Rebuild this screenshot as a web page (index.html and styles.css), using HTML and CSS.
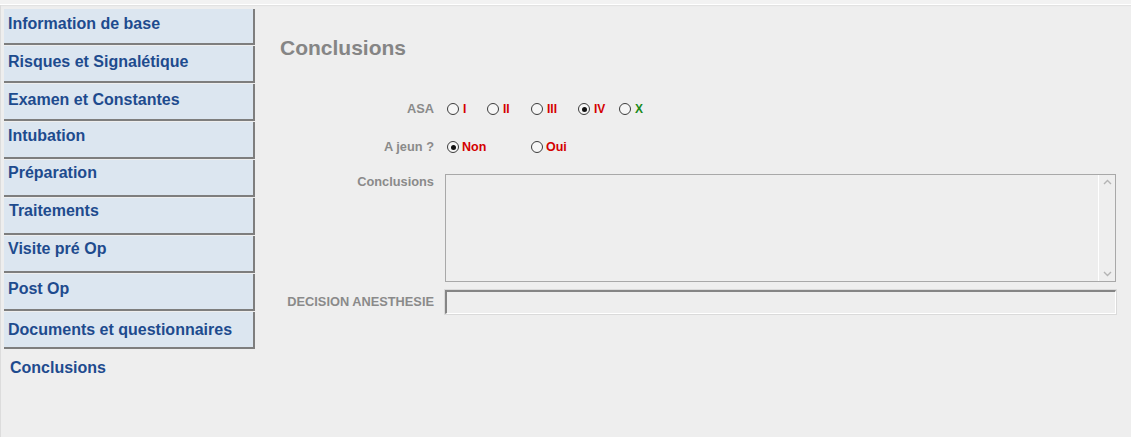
FILE: index.html
```html
<!DOCTYPE html>
<html lang="fr">
<head>
<meta charset="utf-8">
<title>Conclusions</title>
<link rel="stylesheet" href="styles.css">
</head>
<body>
<div class="topbar"></div>
<div class="page">
  <nav class="sidebar">
    <div class="tab tab-first">Information de base</div>
    <div class="tab">Risques et Signalétique</div>
    <div class="tab">Examen et Constantes</div>
    <div class="tab tab-p5">Intubation</div>
    <div class="tab tab-p4">Préparation</div>
    <div class="tab tab-p4 tab-indent">Traitements</div>
    <div class="tab tab-p4">Visite pré Op</div>
    <div class="tab tab-p6">Post Op</div>
    <div class="tab tab-p9">Documents et questionnaires</div>
    <div class="current">Conclusions</div>
  </nav>
  <main class="main">
    <h1 class="title">Conclusions</h1>
    <div class="form">
      <div class="row row-asa">
        <div class="label">ASA</div>
        <div class="radios">
          <span class="opt opt-asa1"><span class="radio"></span><span class="rlabel red">I</span></span>
          <span class="opt opt-asa2"><span class="radio"></span><span class="rlabel red">II</span></span>
          <span class="opt opt-asa3"><span class="radio"></span><span class="rlabel red">III</span></span>
          <span class="opt opt-asa4"><span class="radio checked"></span><span class="rlabel red">IV</span></span>
          <span class="opt"><span class="radio"></span><span class="rlabel green">X</span></span>
        </div>
      </div>
      <div class="row row-jeun">
        <div class="label">A jeun ?</div>
        <div class="radios">
          <span class="opt opt-non"><span class="radio checked"></span><span class="rlabel red big">Non</span></span>
          <span class="opt"><span class="radio"></span><span class="rlabel red big">Oui</span></span>
        </div>
      </div>
      <div class="row row-concl">
        <div class="label label-top">Conclusions</div>
        <div class="textarea">
          <div class="ta-body"></div>
          <div class="ta-scroll">
            <svg width="9" height="6" viewBox="0 0 9 6"><path d="M1 5 L4.5 1.5 L8 5" fill="none" stroke="#b4b4b4" stroke-width="1.4"/></svg>
            <svg width="9" height="6" viewBox="0 0 9 6"><path d="M1 1 L4.5 4.5 L8 1" fill="none" stroke="#b4b4b4" stroke-width="1.4"/></svg>
          </div>
        </div>
      </div>
      <div class="row row-dec">
        <div class="label">DECISION ANESTHESIE</div>
        <div class="input"></div>
      </div>
    </div>
  </main>
</div>
</body>
</html>
```

FILE: styles.css
```css
html, body {
  margin: 0;
  padding: 0;
  background: #eeeeee;
  font-family: "Liberation Sans", Arial, sans-serif;
  height: 437px;
  overflow: hidden;
}

.topbar {
  height: 4px;
  background: #f2f2f2;
  border-bottom: 1px solid #ffffff;
  box-shadow: 0 1px 1px #e2e2e2;
}

.page {
  display: flex;
  height: 432px;
  border-left: 1px solid #dcdcdc;
}

.sidebar {
  width: 251px;
  padding: 4px 0 0 3px;
  flex: none;
  display: flex;
  flex-direction: column;
}

.tab {
  height: 37px;
  margin-bottom: 1px;
  background: #dce6f0;
  border-right: 2px solid #7e7e7e;
  border-bottom: 2px solid #7e7e7e;
  color: #1e4b8e;
  font-weight: bold;
  font-size: 16px;
  line-height: 18px;
  padding: 7px 0 0 4px;
  box-sizing: border-box;
  white-space: nowrap;
}

.tab-first {
  height: 36px;
  padding-top: 6px;
}

.tab-p4 { padding-top: 4px; }
.tab-p5 { padding-top: 5px; }
.tab-p6 { padding-top: 6px; }
.tab-p9 { padding-top: 9px; }
.tab-indent { padding-left: 5px; }

.current {
  color: #1e4b8e;
  font-weight: bold;
  font-size: 16px;
  line-height: 18px;
  padding: 9px 0 0 6px;
}

.main {
  flex: 1;
  padding: 0 15px 0 25px;
}

.title {
  margin: 31px 0 0 0;
  font-size: 21px;
  line-height: 24px;
  font-weight: bold;
  color: #858585;
}

.form {
  margin-top: 39px;
  display: flex;
  flex-direction: column;
}

.row {
  display: flex;
  align-items: center;
}

.label {
  width: 154px;
  flex: none;
  text-align: right;
  padding-right: 11px;
  box-sizing: content-box;
  color: #8a8a8a;
  font-weight: bold;
  font-size: 12.8px;
  line-height: 16px;
  white-space: nowrap;
}

.label-top {
  align-self: flex-start;
  margin-top: 0;
}

.row-asa { height: 20px; }
.row-jeun { height: 20px; margin-top: 18px; }
.row-concl { margin-top: 17px; align-items: flex-start; }
.row-dec { margin-top: 8px; }

.radios {
  display: flex;
  align-items: center;
}

.opt {
  display: flex;
  align-items: center;
  margin-right: 20px;
}

.opt-asa1 { width: 40px; margin-right: 0; }
.opt-asa2 { width: 44px; margin-right: 0; }
.opt-asa3 { width: 47px; margin-right: 0; }
.opt-asa4 { width: 41px; margin-right: 0; }
.opt-non { width: 84px; margin-right: 0; }

.radio {
  width: 12px;
  height: 12px;
  border: 1px solid #3c3c3c;
  border-radius: 50%;
  background: #f6f6f6;
  box-sizing: border-box;
  position: relative;
  margin-left: 2px;
  flex: none;
}

.radio.checked::after {
  content: "";
  position: absolute;
  left: 2.5px;
  top: 2.5px;
  width: 5px;
  height: 5px;
  border-radius: 50%;
  background: #111111;
}

.rlabel {
  font-weight: bold;
  font-size: 12px;
  margin-left: 4px;
  line-height: 14px;
}

.rlabel.big {
  font-size: 12.5px;
  margin-left: 3px;
}

.red { color: #d40000; }
.green { color: #1a8a1a; }

.textarea {
  flex: 1;
  height: 108px;
  border: 1px solid #a8a8a8;
  box-sizing: border-box;
  display: flex;
}

.ta-body { flex: 1; }

.ta-scroll {
  width: 16px;
  border-left: 1px solid #ffffff;
  display: flex;
  flex-direction: column;
  justify-content: space-between;
  align-items: center;
  padding: 4px 0 4px 0;
}

.input {
  flex: 1;
  height: 24px;
  box-sizing: border-box;
  border-top: 2px solid #858585;
  border-left: 2px solid #858585;
  border-right: 1px solid #ffffff;
  border-bottom: 1px solid #ffffff;
  outline: 1px solid #dadada;
}
```
